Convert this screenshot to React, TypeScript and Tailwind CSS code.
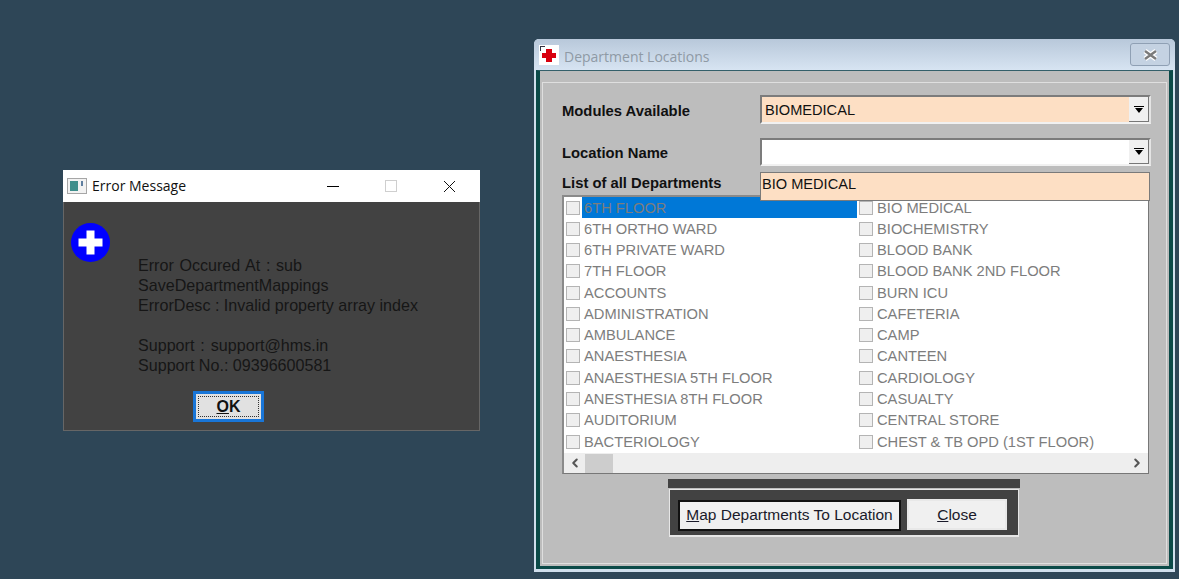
import { ChevronLeft, ChevronRight } from "lucide-react"

const departments = [
  ["6TH FLOOR", "BIO MEDICAL"],
  ["6TH ORTHO WARD", "BIOCHEMISTRY"],
  ["6TH PRIVATE WARD", "BLOOD BANK"],
  ["7TH FLOOR", "BLOOD BANK 2ND FLOOR"],
  ["ACCOUNTS", "BURN ICU"],
  ["ADMINISTRATION", "CAFETERIA"],
  ["AMBULANCE", "CAMP"],
  ["ANAESTHESIA", "CANTEEN"],
  ["ANAESTHESIA 5TH FLOOR", "CARDIOLOGY"],
  ["ANESTHESIA 8TH FLOOR", "CASUALTY"],
  ["AUDITORIUM", "CENTRAL STORE"],
  ["BACTERIOLOGY", "CHEST & TB OPD (1ST FLOOR)"],
]

function Check({ label, selected }: { label: string; selected?: boolean }) {
  return (
    <div className="flex items-center h-[21.27px]">
      <span className="w-[14px] h-[14px] ml-[2px] shrink-0 bg-[#efefef] border border-[#b4b4b4]" />
      <span
        className={
          "ml-[2px] pl-[2px] h-full flex-1 flex items-center text-[14.7px] whitespace-nowrap text-[#7d7d7d] " +
          (selected ? "bg-[#0078d7]" : "")
        }
      >
        {label}
      </span>
    </div>
  )
}

function Combo({ value, tint }: { value: string; tint: string }) {
  return (
    <div className="flex-1 h-full flex items-stretch border-t-2 border-l-2 border-[#7c7c7c] border-b-2 border-b-[#f1f1f1] border-r-2 border-r-[#e4e4e4]">
      <div className={"flex-1 flex items-center pl-[3px] pt-[3px] text-[14.6px] text-[#111] " + tint}>{value}</div>
      <div className="w-[20px] flex items-center justify-center bg-[#f0f0f0] border-r border-b border-[#777]">
        <svg width="10" height="7" viewBox="0 0 10 7">
          <path d="M0 0h10v1H0zM1 2h8L5 7z" fill="#000" />
        </svg>
      </div>
    </div>
  )
}

function ErrorWindow() {
  return (
    <div className="absolute left-[63px] top-[170px] w-[417px] h-[261px] flex flex-col font-['Liberation_Sans',sans-serif]">
      <div className="h-[32px] bg-white flex items-center shrink-0">
        <svg className="ml-[4px]" width="20" height="16" viewBox="0 0 20 16">
          <rect x="0.5" y="0.5" width="19" height="15" fill="#f2f2f2" stroke="#a6a6a6" />
          <rect x="3" y="3" width="8" height="10" fill="#3f8f8c" />
          <rect x="14" y="3" width="2" height="5" fill="#5f7fa0" />
        </svg>
        <span className="ml-[5px] pb-[2px] text-[14px] text-[#111] font-['Open_Sans',sans-serif]">Error Message</span>
        <div className="ml-auto flex items-center mr-[24px] gap-[46px]">
          <span className="w-[12px] h-px bg-black" />
          <span className="w-[12px] h-[12px] border border-[#cfcfcf]" />
          <svg width="13" height="13" viewBox="0 0 13 13">
            <path d="M1 1l11 11M12 1L1 12" stroke="#111" strokeWidth="1" fill="none" />
          </svg>
        </div>
      </div>
      <div className="flex-1 bg-[#424242] border border-t-0 border-[#666] flex items-start">
        <svg className="ml-[7px] mt-[21px] shrink-0" width="39" height="39" viewBox="0 0 39 39">
          <circle cx="19.5" cy="19.5" r="19.5" fill="#0000ff" />
          <path d="M15.5 7.5h8v8h8v8h-8v8h-8v-8h-8v-8h8z" fill="#fff" />
        </svg>
        <div className="ml-[28px] pt-[53px] flex flex-col text-[16.1px] leading-[20px] text-[#161616]">
          <div className="[word-spacing:1.2px]">Error Occured At : sub</div>
          <div>SaveDepartmentMappings</div>
          <div>ErrorDesc : Invalid property array index</div>
          <div className="mt-[20px] [word-spacing:1.5px]">Support : support@hms.in</div>
          <div>Support No.: 09396600581</div>
          <button className="mt-[16px] ml-[55px] w-[71px] h-[31px] border-[3px] border-[#1976d8] bg-[#e1e1e1] p-[2px]">
            <span className="w-full h-full flex items-center justify-center border border-dotted border-[#333] text-[16px] font-bold text-[#111]">
              <u>O</u>K
            </span>
          </button>
        </div>
      </div>
    </div>
  )
}

function DepartmentWindow() {
  return (
    <div className="absolute left-[534px] top-[39px] w-[641px] h-[533px] flex flex-col rounded-t-[5px] overflow-hidden bg-[#cfdeec] font-['Liberation_Sans',sans-serif]">
      <div className="h-[31px] shrink-0 flex items-center bg-gradient-to-b from-[#b8c8da] to-[#d7e4f2]">
        <svg className="ml-[5px]" width="20" height="20" viewBox="0 0 20 20">
          <rect width="20" height="20" fill="#fff" />
          <path d="M1.5 1v5M1 1.5h5" stroke="#334" strokeWidth="1" />
          <path d="M7 4h6v4h4v5h-4v4H7v-4H3V8h4z" fill="#d8000f" />
        </svg>
        <span className="ml-[5px] pt-[4px] text-[14px] text-[#8f9aa5] font-['Open_Sans',sans-serif]">Department Locations</span>
        <div className="ml-auto mr-[5px] w-[40px] h-[23px] rounded-[3px] border border-[#8fa0b4] bg-[#c4d2e2] flex items-center justify-center">
          <svg width="17" height="14" viewBox="0 0 17 14">
            <path d="M3 3l11 8M14 3L3 11" stroke="#fff" strokeWidth="5" fill="none" />
            <path d="M3 3l11 8M14 3L3 11" stroke="#7a7a7a" strokeWidth="2.5" fill="none" />
          </svg>
        </div>
      </div>

      <div className="flex-1 mx-[2px] mb-[3px] border-x-[4px] border-b-[3px] border-t border-[#0b4a48] border-t-[#34606a] bg-[#bdbdbd] pt-[11px] px-[2px] pb-[2px] flex">
        <div className="flex-1 border border-[#dfdfdf] pt-[12px] pl-[19px] pr-[15px] relative">
          <div className="flex items-center h-[29px]">
            <span className="w-[198px] pt-[3px] text-[14.8px] font-bold text-[#111]">Modules Available</span>
            <Combo value="BIOMEDICAL" tint="bg-[#fddfc4]" />
          </div>
          <div className="flex items-center h-[28px] mt-[14px]">
            <span className="w-[198px] pt-[2px] text-[14.8px] font-bold text-[#111]">Location Name</span>
            <Combo value="" tint="bg-white" />
          </div>
          <div className="h-[29px] flex items-center pt-[6px] text-[14.8px] font-bold text-[#111]">List of all Departments</div>

          <div className="mr-[2px] h-[279px] border-t-2 border-l-2 border-[#8a8a8a] border-b border-r border-b-[#777] border-r-[#777] bg-white flex flex-col">
            <div className="flex-1 grid grid-cols-[293px_1fr] content-start">
              {departments.map(([left, right], i) => (
                <div key={left} className="contents">
                  <Check label={left} selected={i === 0} />
                  <Check label={right} />
                </div>
              ))}
            </div>
            <div className="h-[20px] bg-[#eeeeee] flex items-center justify-between text-[#555]">
              <div className="flex items-center h-full">
                <ChevronLeft className="w-[16px] h-[14px] ml-[3px]" strokeWidth={3.5} />
                <span className="ml-[2px] w-[28px] h-[19px] bg-[#cdcdcd]" />
              </div>
              <ChevronRight className="w-[16px] h-[14px] mr-[3px]" strokeWidth={3.5} />
            </div>
          </div>

          <div className="mt-[5px] ml-[106px] w-[352px]">
            <div className="h-[9px] bg-[#424242]" />
            <div className="mt-[1px] h-[48px] mx-[1px] bg-[#424242] border-l border-t border-r border-b-2 border-[#e6e6e6] flex items-center pt-[5px] pl-[8px] gap-[6px]">
              <button className="w-[223px] h-[31px] pb-px bg-[#f0f0f0] border-2 border-[#111] text-[15.5px] text-[#1a1a2a] flex items-center justify-center">
                <span>
                  <u>M</u>ap Departments To Location
                </span>
              </button>
              <button className="w-[100px] h-[31px] mb-[2px] pt-px bg-[#f0f0f0] border-2 border-[#e8e8e8] text-[15.5px] text-[#1a1a2a] flex items-center justify-center">
                <span>
                  <u>C</u>lose
                </span>
              </button>
            </div>
          </div>

          {/* open combo list */}
          <div className="absolute left-[217px] top-[89px] w-[390px] h-[29px] bg-[#fddfc4] border border-[#7a7a7a] flex items-center pl-[1px] pb-[3px] text-[14.6px] text-[#111]">
            BIO MEDICAL
          </div>
        </div>
      </div>
    </div>
  )
}

export default function App() {
  return (
    <div className="relative w-[1179px] h-[579px] overflow-hidden bg-[#2e4657]">
      <ErrorWindow />
      <DepartmentWindow />
    </div>
  )
}
